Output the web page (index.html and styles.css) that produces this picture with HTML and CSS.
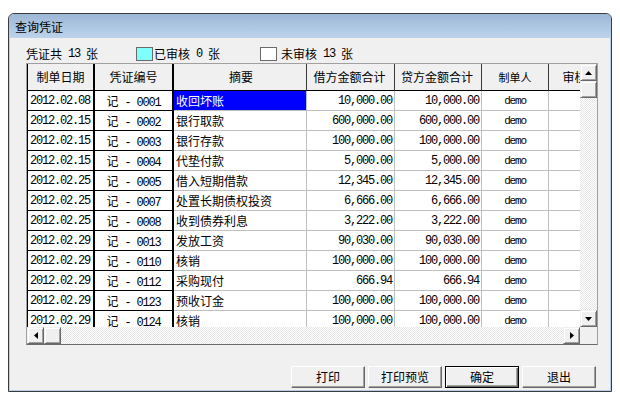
FILE: index.html
```html
<!DOCTYPE html>
<html lang="zh-CN">
<head>
<meta charset="utf-8">
<title>查询凭证</title>
<link rel="stylesheet" href="styles.css">
</head>
<body>
<div class="window">
  <div class="titlebar">查询凭证</div>
  <div class="client">
    <div class="stats">
      <div class="stat stat-total">凭证共<span class="m"> 13 </span>张</div>
      <div class="stat stat-audited"><span class="swatch swatch-cyan"></span>已审核<span class="m"> 0 </span>张</div>
      <div class="stat stat-pending"><span class="swatch swatch-white"></span>未审核<span class="m"> 13 </span>张</div>
    </div>
    <div class="grid">
      <div class="cells">
        <div class="row head">
          <div class="c c1">制单日期</div>
          <div class="c c2">凭证编号</div>
          <div class="c c3">摘要</div>
          <div class="c c4">借方金额合计</div>
          <div class="c c5">贷方金额合计</div>
          <div class="c c6">制单人</div>
          <div class="c c7">审核人</div>
        </div>
        <div class="row">
          <div class="c c1 m">2012.02.08</div><div class="c c2">记<span class="m"> - 0001</span></div><div class="c c3 sel">收回坏账</div><div class="c c4 m">10,000.00</div><div class="c c5 m">10,000.00</div><div class="c c6 m">demo</div><div class="c c7"></div>
        </div>
        <div class="row">
          <div class="c c1 m">2012.02.15</div><div class="c c2">记<span class="m"> - 0002</span></div><div class="c c3">银行取款</div><div class="c c4 m">600,000.00</div><div class="c c5 m">600,000.00</div><div class="c c6 m">demo</div><div class="c c7"></div>
        </div>
        <div class="row">
          <div class="c c1 m">2012.02.15</div><div class="c c2">记<span class="m"> - 0003</span></div><div class="c c3">银行存款</div><div class="c c4 m">100,000.00</div><div class="c c5 m">100,000.00</div><div class="c c6 m">demo</div><div class="c c7"></div>
        </div>
        <div class="row">
          <div class="c c1 m">2012.02.15</div><div class="c c2">记<span class="m"> - 0004</span></div><div class="c c3">代垫付款</div><div class="c c4 m">5,000.00</div><div class="c c5 m">5,000.00</div><div class="c c6 m">demo</div><div class="c c7"></div>
        </div>
        <div class="row">
          <div class="c c1 m">2012.02.25</div><div class="c c2">记<span class="m"> - 0005</span></div><div class="c c3">借入短期借款</div><div class="c c4 m">12,345.00</div><div class="c c5 m">12,345.00</div><div class="c c6 m">demo</div><div class="c c7"></div>
        </div>
        <div class="row">
          <div class="c c1 m">2012.02.25</div><div class="c c2">记<span class="m"> - 0007</span></div><div class="c c3">处置长期债权投资</div><div class="c c4 m">6,666.00</div><div class="c c5 m">6,666.00</div><div class="c c6 m">demo</div><div class="c c7"></div>
        </div>
        <div class="row">
          <div class="c c1 m">2012.02.25</div><div class="c c2">记<span class="m"> - 0008</span></div><div class="c c3">收到债券利息</div><div class="c c4 m">3,222.00</div><div class="c c5 m">3,222.00</div><div class="c c6 m">demo</div><div class="c c7"></div>
        </div>
        <div class="row">
          <div class="c c1 m">2012.02.29</div><div class="c c2">记<span class="m"> - 0013</span></div><div class="c c3">发放工资</div><div class="c c4 m">90,030.00</div><div class="c c5 m">90,030.00</div><div class="c c6 m">demo</div><div class="c c7"></div>
        </div>
        <div class="row">
          <div class="c c1 m">2012.02.29</div><div class="c c2">记<span class="m"> - 0110</span></div><div class="c c3">核销</div><div class="c c4 m">100,000.00</div><div class="c c5 m">100,000.00</div><div class="c c6 m">demo</div><div class="c c7"></div>
        </div>
        <div class="row">
          <div class="c c1 m">2012.02.29</div><div class="c c2">记<span class="m"> - 0112</span></div><div class="c c3">采购现付</div><div class="c c4 m">666.94</div><div class="c c5 m">666.94</div><div class="c c6 m">demo</div><div class="c c7"></div>
        </div>
        <div class="row">
          <div class="c c1 m">2012.02.29</div><div class="c c2">记<span class="m"> - 0123</span></div><div class="c c3">预收订金</div><div class="c c4 m">100,000.00</div><div class="c c5 m">100,000.00</div><div class="c c6 m">demo</div><div class="c c7"></div>
        </div>
        <div class="row">
          <div class="c c1 m">2012.02.29</div><div class="c c2">记<span class="m"> - 0124</span></div><div class="c c3">核销</div><div class="c c4 m">100,000.00</div><div class="c c5 m">100,000.00</div><div class="c c6 m">demo</div><div class="c c7"></div>
        </div>
      </div>
      <div class="vscroll">
        <div class="sbtn"><svg width="7" height="4" viewBox="0 0 7 4"><polygon points="3.5,0 7,4 0,4" fill="#000"/></svg></div>
        <div class="sbtn thumb"></div>
        <div class="track"></div>
        <div class="sbtn"><svg width="7" height="4" viewBox="0 0 7 4"><polygon points="0,0 7,0 3.5,4" fill="#000"/></svg></div>
      </div>
      <div class="hscroll">
        <div class="sbtn"><svg width="4" height="7" viewBox="0 0 4 7"><polygon points="4,0 4,7 0,3.5" fill="#000"/></svg></div>
        <div class="sbtn thumb"></div>
        <div class="track"></div>
        <div class="sbtn"><svg width="4" height="7" viewBox="0 0 4 7"><polygon points="0,0 4,3.5 0,7" fill="#000"/></svg></div>
      </div>
      <div class="corner"></div>
    </div>
    <div class="buttons">
      <div class="btn">打印</div>
      <div class="btn">打印预览</div>
      <div class="btn default">确定</div>
      <div class="btn">退出</div>
    </div>
  </div>
</div>
</body>
</html>
```
FILE: styles.css
```css
html, body {
  margin: 0;
  padding: 0;
  background: #ffffff;
}
body {
  font-family: "Noto Sans CJK SC", "Liberation Sans", sans-serif;
  font-size: 12px;
  color: #000;
}
.m {
  font-family: "Liberation Mono", "Noto Sans CJK SC", monospace;
  font-size: 12px;
  letter-spacing: -1.2px;
}
.window {
  margin: 13px 0 0 8px;
  width: 604px;
  height: 379px;
  box-sizing: border-box;
  border: 1px solid #3c3c3c;
  border-radius: 6px 6px 0 0;
  background: #b6cfe8;
  display: flex;
  flex-direction: column;
  overflow: hidden;
}
.titlebar {
  height: 24px;
  line-height: 25px;
  padding-left: 6px;
  background: linear-gradient(#9cb7d6, #bcd3eb);
  flex: none;
}
.client {
  flex: 1;
  margin: 0 1px 1px 1px;
  background: #f0f0f0;
  display: flex;
  flex-direction: column;
  padding: 6px 0 2px 12px;
  min-height: 0;
}
.stats {
  display: flex;
  height: 16px;
  line-height: 16px;
  align-items: center;
  margin: 2px 0 0 4px;
}
.stat { display: flex; align-items: center; white-space: pre; }
.stat-total { width: 110px; }
.stat-audited { width: 124px; }
.swatch {
  width: 15px;
  height: 12px;
  border: 1px solid #6a6a6a;
  display: inline-block;
  flex: none;
}
.swatch-cyan { background: #80ffff; margin-right: 1px; }
.swatch-white { background: #ffffff; margin-right: 4px; }

.grid {
  margin: 1px 0 0 4px;
  width: 572px;
  height: 282px;
  box-sizing: border-box;
  border: 1px solid #8a8a8a;
  border-color: #a0a0a0 #a0a0a0 #6a6a6a #a0a0a0;
  display: grid;
  grid-template-columns: 553px 17px;
  grid-template-rows: 263px 17px;
  background: #fff;
}
.cells {
  overflow: hidden;
  background: #fff;
}
.row {
  display: grid;
  grid-template-columns: 68px 79px 133px 88px 87px 67px 64px;
  height: 20px;
}
.row.head {
  height: 27px;
  background: #f0f0f0;
}
.c {
  box-sizing: border-box;
  border-right: 1px solid #c0c0c0;
  border-bottom: 1px solid #c0c0c0;
  white-space: pre;
  overflow: hidden;
  line-height: 20px;
}
.row.head .c {
  border-right: 1px solid #3a3a3a;
  border-bottom: 1px solid #000;
  text-align: center;
  line-height: 26px;
}
.c1 {
  border-left: 1px solid #000;
  border-right: 2px solid #000 !important;
  border-bottom-color: #000 !important;
  padding-left: 2px;
}
.c2 {
  border-right: 2px solid #000 !important;
  border-bottom-color: #000 !important;
  text-align: center;
}
.c3 { padding-left: 2px; }
.c4, .c5 { text-align: right; padding-right: 2px; }
.c6 { text-align: center; font-size: 11px; }
.row.head .c1 { padding-left: 0; }
.sel {
  background: #0000ff;
  color: #fff;
}

.vscroll {
  display: flex;
  flex-direction: column;
}
.hscroll {
  display: flex;
}
.track {
  flex: 1;
  background-color: #fff;
  background-image: repeating-conic-gradient(#ffffff 0 25%, #e6e6e6 0 50%);
  background-size: 2px 2px;
}
.sbtn {
  width: 17px;
  height: 17px;
  box-sizing: border-box;
  flex: none;
  background: #f0f0f0;
  border: 1px solid;
  border-color: #f0f0f0 #696969 #696969 #f0f0f0;
  box-shadow: inset 1px 1px #ffffff, inset -1px -1px #a0a0a0;
  display: flex;
  align-items: center;
  justify-content: center;
}
.sbtn svg { display: block; }
.corner { background: #f0f0f0; }

.buttons {
  margin-top: auto;
  display: flex;
  justify-content: flex-end;
  gap: 3px;
  padding-right: 14px;
}
.btn {
  width: 74px;
  height: 22px;
  box-sizing: border-box;
  background: #f0f0f0;
  border: 1px solid;
  border-color: #ffffff #696969 #696969 #ffffff;
  box-shadow: inset -1px -1px #a0a0a0;
  text-align: center;
  line-height: 20px;
}
.btn.default {
  border: 1px solid #000;
  box-shadow: inset 1px 1px #fff, inset -1px -1px #696969, inset -2px -2px #a0a0a0;
}
```
